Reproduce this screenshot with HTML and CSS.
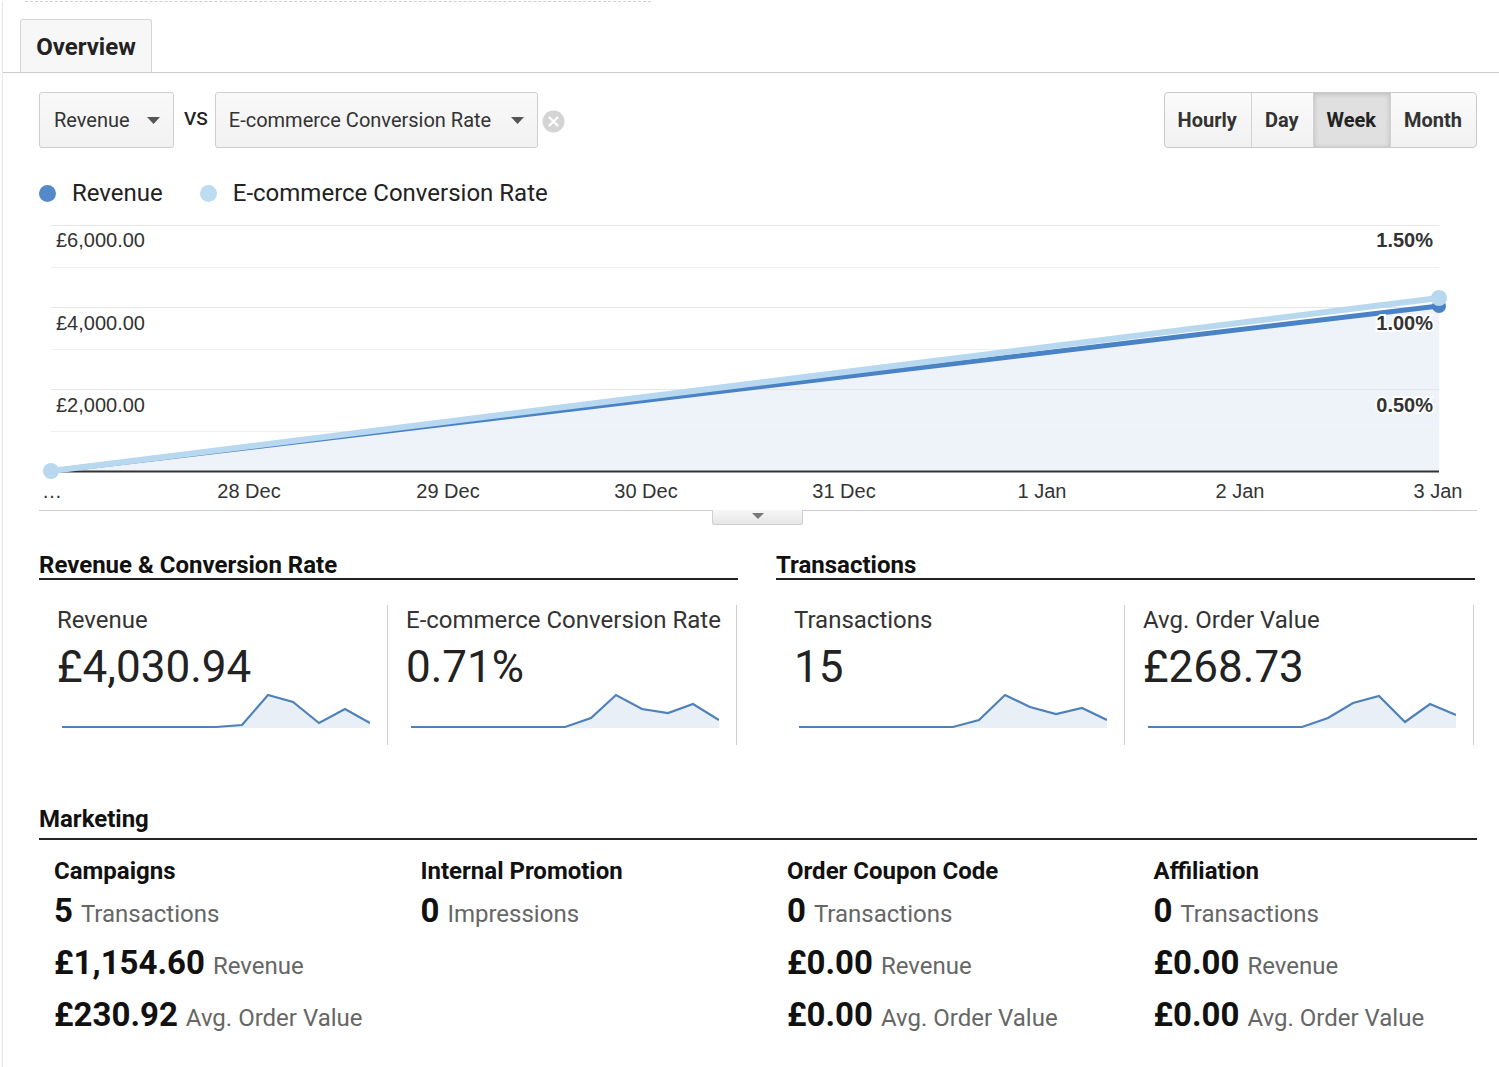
FILE: index.html
```html
<!DOCTYPE html>
<html>
<head>
<meta charset="utf-8">
<title>Ecommerce Overview</title>
<link rel="stylesheet" href="styles.css">
</head>
<body>
<div class="page">
  <div class="dashed"></div>
  <div class="tabs"><div class="tab">Overview</div></div>
  <div class="content">
    <div class="controls">
      <div class="select sel-rev"><span>Revenue</span><svg class="caret" width="13" height="7" viewBox="0 0 13 7"><polygon points="0,0 13,0 6.5,7" fill="#555"/></svg></div>
      <span class="vs">VS</span>
      <div class="select sel-ecr"><span>E-commerce Conversion Rate</span><svg class="caret" width="13" height="7" viewBox="0 0 13 7"><polygon points="0,0 13,0 6.5,7" fill="#555"/></svg></div>
      <svg class="clear" width="23" height="23" viewBox="0 0 23 23"><circle cx="11.5" cy="11.5" r="11" fill="#d4d4d4"/><path d="M7.5 7.5 L15.5 15.5 M15.5 7.5 L7.5 15.5" stroke="#fff" stroke-width="2.2" stroke-linecap="round"/></svg>
      <div class="btn-group">
        <div class="btn">Hourly</div>
        <div class="btn">Day</div>
        <div class="btn active">Week</div>
        <div class="btn">Month</div>
      </div>
    </div>

    <div class="legend">
      <span class="dot dot-dark"></span><span class="legend-label">Revenue</span>
      <span class="dot dot-light"></span><span class="legend-label">E-commerce Conversion Rate</span>
    </div>

    <div class="chart">
      <svg class="chart-svg" width="1436" height="290" viewBox="0 0 1436 290">
        <polygon points="12,251 1400,86 1400,251" fill="#eef3fa"/>
        <g stroke="#e6e6e6" stroke-width="1">
          <line x1="12" y1="5.5" x2="1400" y2="5.5"/>
          <line x1="12" y1="47.5" x2="1400" y2="47.5" stroke="#f0f0f0"/>
          <line x1="12" y1="87.5" x2="1400" y2="87.5"/>
          <line x1="12" y1="129.5" x2="1400" y2="129.5" stroke="#f0f0f0"/>
          <line x1="12" y1="169.5" x2="1400" y2="169.5"/>
          <line x1="12" y1="211.5" x2="1400" y2="211.5" stroke="#f0f0f0"/>
        </g>
        <line x1="12" y1="251.5" x2="1400" y2="251.5" stroke="#333" stroke-width="2"/>
        <line x1="12" y1="251" x2="1400" y2="86" stroke="#4a82c6" stroke-width="5" stroke-linecap="round"/>
        <line x1="12" y1="251" x2="1400" y2="78" stroke="#b8d8ef" stroke-width="6" stroke-linecap="round"/>
        <circle cx="12" cy="251" r="8" fill="#b8d8ef"/>
        <circle cx="1400" cy="86" r="7" fill="#4a82c6"/>
        <circle cx="1400" cy="78" r="8" fill="#b8d8ef"/>
        <g class="ylab">
          <text x="17" y="27">£6,000.00</text>
          <text x="17" y="110">£4,000.00</text>
          <text x="17" y="192">£2,000.00</text>
        </g>
        <g class="ylab-r">
          <text x="1394" y="27">1.50%</text>
          <text x="1394" y="110">1.00%</text>
          <text x="1394" y="192">0.50%</text>
        </g>
        <g class="xlab">
          <text x="13" y="278">…</text>
          <text x="210" y="278">28 Dec</text>
          <text x="409" y="278">29 Dec</text>
          <text x="607" y="278">30 Dec</text>
          <text x="805" y="278">31 Dec</text>
          <text x="1003" y="278">1 Jan</text>
          <text x="1201" y="278">2 Jan</text>
          <text x="1399" y="278">3 Jan</text>
        </g>
      </svg>
      <div class="toggle"><svg width="12" height="6" viewBox="0 0 12 6"><polygon points="0,0 12,0 6,6" fill="#777"/></svg></div>
    </div>

    <div class="sections">
      <div class="section">
        <div class="section-title">Revenue &amp; Conversion Rate</div>
        <div class="cards">
          <div class="card">
            <div class="card-label">Revenue</div>
            <div class="card-value">£4,030.94</div>
            <svg class="spark" width="308" height="36" viewBox="0 0 308 36">
              <polygon points="0,34 154,34 180,32 206,2 231,9 257,30 283,16 308,30 308,35 0,35" fill="#e9eff7"/>
              <polyline points="0,34 154,34 180,32 206,2 231,9 257,30 283,16 308,30" fill="none" stroke="#4f81b9" stroke-width="2.2"/>
            </svg>
          </div>
          <div class="card">
            <div class="card-label">E-commerce Conversion Rate</div>
            <div class="card-value">0.71%</div>
            <svg class="spark" width="308" height="36" viewBox="0 0 308 36">
              <polygon points="0,34 154,34 180,25 205,2 231,16 257,20 282,11 308,27 308,35 0,35" fill="#e9eff7"/>
              <polyline points="0,34 154,34 180,25 205,2 231,16 257,20 282,11 308,27" fill="none" stroke="#4f81b9" stroke-width="2.2"/>
            </svg>
          </div>
        </div>
      </div>
      <div class="section">
        <div class="section-title">Transactions</div>
        <div class="cards">
          <div class="card">
            <div class="card-label">Transactions</div>
            <div class="card-value">15</div>
            <svg class="spark" width="308" height="36" viewBox="0 0 308 36">
              <polygon points="0,34 154,34 180,27 206,2 231,14 257,21 283,15 308,27 308,35 0,35" fill="#e9eff7"/>
              <polyline points="0,34 154,34 180,27 206,2 231,14 257,21 283,15 308,27" fill="none" stroke="#4f81b9" stroke-width="2.2"/>
            </svg>
          </div>
          <div class="card">
            <div class="card-label">Avg. Order Value</div>
            <div class="card-value">£268.73</div>
            <svg class="spark" width="308" height="36" viewBox="0 0 308 36">
              <polygon points="0,34 154,34 180,25 205,10 231,3 257,29 282,11 308,22 308,35 0,35" fill="#e9eff7"/>
              <polyline points="0,34 154,34 180,25 205,10 231,3 257,29 282,11 308,22" fill="none" stroke="#4f81b9" stroke-width="2.2"/>
            </svg>
          </div>
        </div>
      </div>
    </div>

    <div class="marketing">
      <div class="section-title mk-title">Marketing</div>
      <div class="mk-grid">
        <div class="mk-col">
          <div class="mk-head">Campaigns</div>
          <div class="mk-row"><span class="mk-val">5</span> <span class="mk-lab">Transactions</span></div>
          <div class="mk-row"><span class="mk-val">£1,154.60</span> <span class="mk-lab">Revenue</span></div>
          <div class="mk-row"><span class="mk-val">£230.92</span> <span class="mk-lab">Avg. Order Value</span></div>
        </div>
        <div class="mk-col">
          <div class="mk-head">Internal Promotion</div>
          <div class="mk-row"><span class="mk-val">0</span> <span class="mk-lab">Impressions</span></div>
        </div>
        <div class="mk-col">
          <div class="mk-head">Order Coupon Code</div>
          <div class="mk-row"><span class="mk-val">0</span> <span class="mk-lab">Transactions</span></div>
          <div class="mk-row"><span class="mk-val">£0.00</span> <span class="mk-lab">Revenue</span></div>
          <div class="mk-row"><span class="mk-val">£0.00</span> <span class="mk-lab">Avg. Order Value</span></div>
        </div>
        <div class="mk-col">
          <div class="mk-head">Affiliation</div>
          <div class="mk-row"><span class="mk-val">0</span> <span class="mk-lab">Transactions</span></div>
          <div class="mk-row"><span class="mk-val">£0.00</span> <span class="mk-lab">Revenue</span></div>
          <div class="mk-row"><span class="mk-val">£0.00</span> <span class="mk-lab">Avg. Order Value</span></div>
        </div>
      </div>
    </div>
  </div>
</div>
</body>
</html>
```

FILE: styles.css
```css
* { box-sizing: border-box; }
html, body { margin: 0; padding: 0; background: #fff; }
body {
  font-family: Roboto, "Liberation Sans", sans-serif;
  color: #222;
  overflow: hidden;
}
.page {
  margin-left: 2px;
  border-left: 1px solid #e6e6e6;
  min-height: 1067px;
}
.dashed {
  margin-left: 22px;
  width: 626px;
  height: 1px;
  margin-top: 1px;
  border-top: 1px dashed #cfcfcf;
}
.tabs {
  padding-top: 17px;
  padding-left: 17px;
  border-bottom: 1px solid #cccccc;
  display: flex;
}
.tab {
  width: 132px;
  height: 53px;
  border: 1px solid #d6d6d6;
  border-bottom: none;
  border-radius: 3px 3px 0 0;
  background: #f7f7f7;
  font-weight: 700;
  font-size: 24px;
  line-height: 52px;
  padding-top: 1px;
  text-align: center;
  color: #222;
}
.content {
  padding: 0 22px 0 36px;
}
.controls {
  margin-top: 19px;
  height: 56px;
  display: flex;
  align-items: center;
}
.select {
  height: 56px;
  border: 1px solid #cfcfcf;
  border-radius: 3px;
  background: linear-gradient(#f9f9f9, #f1f1f1);
  display: flex;
  align-items: center;
  justify-content: space-between;
  padding: 0 13px 0 14px;
  font-size: 20px;
  color: #333;
}
.sel-rev { width: 135px; }
.sel-ecr { width: 323px; padding-left: 13px; }
.caret { margin-top: 1px; }
.vs {
  font-size: 19px;
  font-weight: 500;
  color: #222;
  margin: -4px 7px 0 10px;
}
.clear { margin-left: 4px; margin-top: 2px; }
.btn-group {
  margin-left: auto;
  display: flex;
  height: 56px;
  border: 1px solid #c9c9c9;
  border-radius: 4px;
  overflow: hidden;
  background: linear-gradient(#fbfbfb, #f1f1f1);
}
.btn {
  padding: 0 14px 0 13px;
  font-size: 20px;
  font-weight: 700;
  color: #333;
  line-height: 54px;
  border-left: 1px solid #d2d2d2;
}
.btn:first-child { border-left: none; }
.btn.active {
  background: #e0e0e0;
  box-shadow: inset 0 1px 5px rgba(0, 0, 0, 0.18);
  color: #222;
}
.legend {
  margin-top: 30px;
  height: 30px;
  display: flex;
  align-items: center;
  font-size: 24px;
  color: #222;
}
.dot {
  width: 17px;
  height: 17px;
  border-radius: 50%;
  display: inline-block;
}
.dot-dark { background: #5689ca; }
.dot-light { background: #bddcf1; margin-left: 37px; }
.legend-label { margin-left: 16px; }
.chart {
  margin-top: 12px;
  position: relative;
  border-bottom: 1px solid #cdcdcd;
  height: 291px;
}
.chart-svg { display: block; }
.ylab text {
  font-family: "Liberation Sans", Arial, sans-serif;
  font-size: 20px;
  fill: #333;
}
.ylab-r text {
  font-family: "Liberation Sans", Arial, sans-serif;
  font-size: 20px;
  font-weight: 700;
  fill: #333;
  text-anchor: end;
  stroke: #fff;
  stroke-width: 4px;
  paint-order: stroke;
}
.xlab text {
  font-family: "Liberation Sans", Arial, sans-serif;
  font-size: 20px;
  fill: #333;
  text-anchor: middle;
}
.toggle {
  position: absolute;
  left: 673px;
  top: 100%;
  width: 91px;
  height: 15px;
  border: 1px solid #cfcfcf;
  border-top: none;
  border-radius: 0 0 3px 3px;
  background: linear-gradient(#f7f7f7, #e6e6e6);
  display: flex;
  justify-content: center;
  padding-top: 3px;
}
.toggle svg { display: block; }
.sections {
  margin-top: 41px;
  display: grid;
  grid-template-columns: 699px 699px;
  column-gap: 38px;
}
.section-title {
  font-size: 24px;
  font-weight: 700;
  line-height: 26px;
  color: #111;
  border-bottom: 2px solid #222;
}
.cards {
  margin-top: 25px;
  display: grid;
  grid-template-columns: 349px 349px;
}
.card {
  height: 140px;
  border-right: 1px solid #cfcfcf;
  padding: 0 0 0 18px;
}
.card + .card { padding-left: 18px; }
.card-label {
  font-size: 24px;
  line-height: 28px;
  color: #333;
  margin-top: 1px;
}
.card-value {
  font-size: 44px;
  line-height: 52px;
  margin-top: 7px;
  color: #222;
}
.spark { display: block; margin-left: 5px; }
.marketing { margin-top: 60px; }
.mk-title {
  line-height: 28px;
  padding-bottom: 5px;
}
.mk-grid {
  display: grid;
  grid-template-columns: 366.5px 366.5px 366.5px 1fr;
  padding-left: 15px;
  margin-top: 17px;
}
.mk-head {
  font-size: 24px;
  font-weight: 700;
  line-height: 28px;
  color: #111;
}
.mk-row {
  line-height: 52px;
  height: 52px;
}
.mk-row:first-of-type { margin-top: 1px; }
.mk-val {
  font-size: 33px;
  font-weight: 700;
  color: #111;
}
.mk-lab {
  font-size: 24px;
  color: #666;
  margin-left: 4px;
}
```
